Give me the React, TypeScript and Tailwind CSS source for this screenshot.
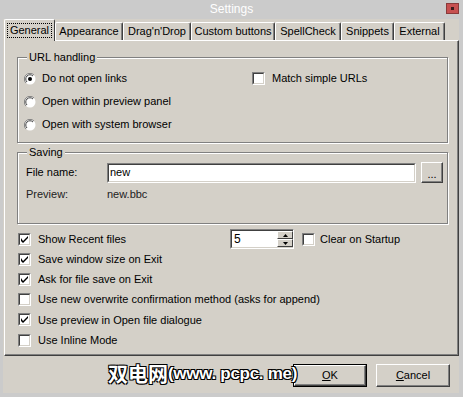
import React from "react";

const font = { fontFamily: '"Liberation Sans", Arial, sans-serif' };

function CheckBox({ checked }: { checked?: boolean }) {
  return (
    <div className="w-[13px] h-[13px] shrink-0 border-t border-l border-[#808080] border-r border-b border-r-white border-b-white">
      <div className="w-full h-full bg-white border-t border-l border-[#404040] border-r border-b border-r-[#d4d0c8] border-b-[#d4d0c8] flex items-center justify-center">
        {checked && (
          <svg width="7" height="7" viewBox="0 0 7 7">
            <path d="M0 2 L0 5 L2 7 L7 2 L7 0 L2 5 Z" fill="#000" />
          </svg>
        )}
      </div>
    </div>
  );
}

function Radio({ checked }: { checked?: boolean }) {
  return (
    <svg width="12" height="12" viewBox="0 0 12 12" className="shrink-0">
      <circle cx="6" cy="6" r="5.5" fill="#fff" />
      <path d="M10 2 A5.5 5.5 0 0 0 2 10" stroke="#808080" strokeWidth="1" fill="none" />
      <path d="M9 3 A4.2 4.2 0 0 0 3 9" stroke="#404040" strokeWidth="1" fill="none" />
      {checked && <circle cx="6" cy="6" r="2" fill="#000" />}
    </svg>
  );
}

function Tab({ label, width, active }: { label: string; width: number; active?: boolean }) {
  return (
    <div
      className={
        "flex items-center justify-center bg-[#d4d0c8] border-t border-l border-white border-r border-r-[#404040] rounded-t-[2px] text-[11px] text-black " +
        (active ? "h-[22px] relative z-10" : "h-[18px] mt-[3px] shadow-[inset_-1px_0_#808080]")
      }
      style={{ width }}
    >
      {active ? (
        <span className="border border-dotted border-black px-[2px] leading-[13px]">{label}</span>
      ) : (
        <span>{label}</span>
      )}
    </div>
  );
}

function Group({ title, className, children }: { title: string; className: string; children: React.ReactNode }) {
  return (
    <div className={"relative border border-[#808080] shadow-[1px_1px_0_#fff,inset_1px_1px_0_#fff] " + className}>
      <span className="absolute -top-[8px] left-[9px] bg-[#d4d0c8] px-[2px] text-[11px] leading-[14px]">{title}</span>
      {children}
    </div>
  );
}

function Button({ label, first, def }: { label: string; first: string; def?: boolean }) {
  return (
    <div className={"w-[74px] h-[23px] " + (def ? "border border-black" : "")}>
      <div className="w-full h-full border-t border-l border-white border-r border-b border-r-[#404040] border-b-[#404040] shadow-[inset_-1px_-1px_#808080] flex items-center justify-center text-[11px]">
        <span>
          <span className="underline">{first}</span>
          {label}
        </span>
      </div>
    </div>
  );
}

const options = [
  { label: "Show Recent files", checked: true },
  { label: "Save window size on Exit", checked: true },
  { label: "Ask for file save on Exit", checked: true },
  { label: "Use new overwrite confirmation method (asks for append)", checked: false },
  { label: "Use preview in Open file dialogue", checked: true },
  { label: "Use Inline Mode", checked: false },
];

export default function App() {
  return (
    <div className="w-[463px] h-[397px] bg-[#cbcbcb] flex flex-col relative overflow-hidden text-black" style={font}>
      {/* title bar */}
      <div className="h-[19px] flex items-start shrink-0">
        <div className="w-[17px]" />
        <div className="flex-1 text-center text-white text-[12px] leading-[19px]">Settings</div>
        <div className="w-[13px] h-[11px] mt-[3px] mr-[4px] bg-[#c75050] border border-[#8a3a3a] flex items-center justify-center">
          <div className="w-[3px] h-[3px] bg-[#3a1a1a]" />
        </div>
      </div>

      {/* dialog body */}
      <div className="mx-[3px] mr-[4px] h-[374px] bg-[#d4d0c8] flex flex-col">
        <div className="flex items-start h-[21px] pl-[1px]">
          <Tab label="General" width={51} active />
          <Tab label="Appearance" width={68} />
          <Tab label="Drag'n'Drop" width={68} />
          <Tab label="Custom buttons" width={84} />
          <Tab label="SpellCheck" width={66} />
          <Tab label="Snippets" width={53} />
          <Tab label="External" width={51} />
        </div>

        <div className="ml-[1px] h-[316px] border-t border-l border-white border-r border-b border-r-[#404040] border-b-[#404040] shadow-[inset_-1px_-1px_#808080] flex flex-col pl-[12px] pr-[10px]">
          <Group title="URL handling" className="mt-[16px] h-[86px] w-[431px] flex">
            <div className="flex flex-col pl-[6px] pt-[14px] gap-[10px] w-[234px]">
              <div className="flex items-center gap-[6px] h-[13px] text-[11px]">
                <Radio checked />
                <span>Do not open links</span>
              </div>
              <div className="flex items-center gap-[6px] h-[13px] text-[11px]">
                <Radio />
                <span>Open within preview panel</span>
              </div>
              <div className="flex items-center gap-[6px] h-[13px] text-[11px]">
                <Radio />
                <span>Open with system browser</span>
              </div>
            </div>
            <div className="flex items-start pt-[14px]">
              <div className="flex items-center gap-[7px] h-[13px] text-[11px]">
                <CheckBox />
                <span>Match simple URLs</span>
              </div>
            </div>
          </Group>

          <Group title="Saving" className="mt-[9px] h-[72px] w-[431px] flex flex-col">
            <div className="flex items-center mt-[9px] pl-[8px] text-[11px]">
              <span className="w-[81px]">File name:</span>
              <div className="w-[309px] h-[20px] border-t border-l border-[#808080] border-r border-b border-r-white border-b-white">
                <div className="w-full h-full bg-white border-t border-l border-[#404040] border-r border-b border-r-[#d4d0c8] border-b-[#d4d0c8] flex items-center pl-[1px]">
                  new
                </div>
              </div>
              <div className="ml-[5px] w-[22px] h-[21px] border-t border-l border-white border-r border-b border-r-[#404040] border-b-[#404040] shadow-[inset_-1px_-1px_#808080] flex items-end justify-center pb-[5px]">
                <span className="leading-[6px] text-[11px]">...</span>
              </div>
            </div>
            <div className="flex items-center mt-[3px] pl-[8px] text-[11px] text-[#222]">
              <span className="w-[81px]">Preview:</span>
              <span>new.bbc</span>
            </div>
          </Group>

          <div className="flex flex-col mt-[5px] pl-[1px]">
            {options.map((o, i) => (
              <div key={o.label} className="flex items-center h-[20.2px] text-[11px]">
                <CheckBox checked={o.checked} />
                <span className="ml-[7px] w-[192px] whitespace-nowrap">{o.label}</span>
                {i === 0 && (
                  <div className="flex items-center">
                    <div className="w-[64px] h-[20px] border-t border-l border-[#808080] border-r border-b border-r-white border-b-white">
                      <div className="w-full h-full bg-white border-t border-l border-[#404040] border-r-0 border-b border-b-[#d4d0c8] flex items-center">
                        <span className="pl-[2px] flex-1 text-[12px]">5</span>
                        <div className="w-[16px] h-full flex flex-col">
                          <div className="flex-1 bg-[#d4d0c8] border-t border-l border-white border-r border-b border-r-[#404040] border-b-[#404040] flex items-center justify-center">
                            <svg width="5" height="3" viewBox="0 0 5 3"><path d="M2.5 0 L5 3 L0 3 Z" fill="#000" /></svg>
                          </div>
                          <div className="flex-1 bg-[#d4d0c8] border-t border-l border-white border-r border-b border-r-[#404040] border-b-[#404040] flex items-center justify-center">
                            <svg width="5" height="3" viewBox="0 0 5 3"><path d="M0 0 L5 0 L2.5 3 Z" fill="#000" /></svg>
                          </div>
                        </div>
                      </div>
                    </div>
                    <div className="ml-[8px] flex items-center gap-[5px]">
                      <CheckBox />
                      <span>Clear on Startup</span>
                    </div>
                  </div>
                )}
              </div>
            ))}
          </div>
        </div>

        <div className="flex justify-end gap-[9px] pr-[9px] mt-[8px]">
          <Button first="O" label="K" def />
          <Button first="C" label="ancel" />
        </div>
      </div>

      {/* watermark overlay */}
      <div className="absolute left-[108px] top-[361px] flex items-center h-[26px] text-white whitespace-nowrap [text-shadow:-1px_-1px_0_#000,1px_-1px_0_#000,-1px_1px_0_#000,1px_1px_0_#000]">
        <span className="text-[20px] font-bold" style={{ fontFamily: '"Noto Sans CJK SC", sans-serif' }}>
          双电网
        </span>
        <span className="text-[17px] font-bold tracking-[-0.3px]" style={{ fontFamily: '"Liberation Sans", Arial, sans-serif' }}>
          (www. pcpc. me)
        </span>
      </div>
    </div>
  );
}
